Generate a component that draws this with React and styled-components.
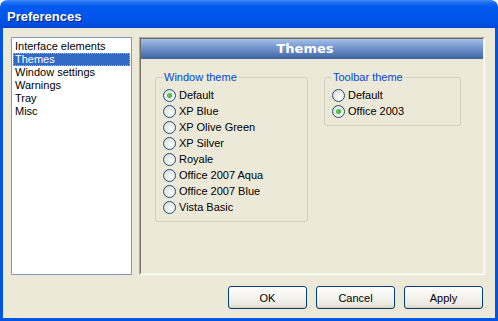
import React from 'react';
import styled, { createGlobalStyle } from 'styled-components';

const GlobalStyle = createGlobalStyle`
  html, body {
    margin: 0;
    padding: 0;
    background: #ffffff;
  }
  body {
    font-family: "Liberation Sans", Arial, sans-serif;
    font-size: 11px;
  }
`;

const Window = styled.div`
  width: 498px;
  height: 321px;
  display: flex;
  flex-direction: column;
  box-sizing: border-box;
`;

const TitleBar = styled.div`
  height: 28px;
  flex: none;
  box-sizing: border-box;
  padding: 9px 0 0 7px;
  border-radius: 7px 7px 0 0;
  background: linear-gradient(#3d8ff8 0, #1a6af2 3px, #0058ee 7px, #0056ec 60%, #0050e2 85%, #0044d0 100%);
  color: #ffffff;
  font-family: "Liberation Sans", Arial, sans-serif;
  font-weight: bold;
  font-size: 13px;
  line-height: 15px;
  text-shadow: 1px 1px 0 #0a1e8c;
`;

const Client = styled.div`
  flex: 1;
  display: flex;
  flex-direction: column;
  background: #ece9d8;
  border: 3px solid #0055e5;
  border-top: none;
  padding: 9px 10px 0 8px;
  min-height: 0;
`;

const Body = styled.div`
  display: flex;
  gap: 7px;
  height: 238px;
`;

const ListBox = styled.ul`
  width: 121px;
  box-sizing: border-box;
  margin: 0;
  padding: 2px 1px;
  list-style: none;
  background: #ffffff;
  border: 1px solid #7f9db9;
`;

const ListItem = styled.li`
  height: 13px;
  line-height: 13px;
  padding-left: 2px;
  box-sizing: border-box;
  color: ${p => (p.$selected ? '#ffffff' : '#000000')};
  background: ${p => (p.$selected ? '#316ac5' : 'transparent')};
  outline: ${p => (p.$selected ? '1px dotted #e8b040' : 'none')};
  outline-offset: -1px;
  white-space: nowrap;
`;

const Panel = styled.div`
  flex: 1;
  border: 1px solid;
  border-color: #aca899 #ffffff #ffffff #aca899;
  display: flex;
`;

const PanelInner = styled.div`
  flex: 1;
  border: 1px solid;
  border-color: #716f64 #f1efe2 #f1efe2 #716f64;
  display: flex;
  flex-direction: column;
`;

const PanelHeader = styled.div`
  height: 20px;
  line-height: 20px;
  text-align: center;
  padding-right: 14px;
  color: #ffffff;
  font-family: "DejaVu Sans", Verdana, sans-serif;
  font-weight: bold;
  font-size: 13px;
  background: linear-gradient(#a6c0ea 0%, #7c9dd2 35%, #5a7fbc 70%, #3d62a0 100%);
`;

const Groups = styled.div`
  display: flex;
  align-items: flex-start;
  gap: 16px;
  padding: 12px 0 0 14px;
`;

const Group = styled.fieldset`
  width: ${p => p.$width}px;
  box-sizing: border-box;
  margin: 0;
  padding: 3px 4px 6px 7px;
  border: 1px solid #d0d0bf;
  border-radius: 3px;
`;

const Legend = styled.legend`
  padding: 0 1px;
  color: #0046d5;
  line-height: 13px;
`;

const RadioRow = styled.label`
  display: flex;
  align-items: center;
  gap: 3px;
  height: 16px;
  color: #000000;
  white-space: nowrap;
`;

const RadioCircle = styled.span`
  width: 13px;
  height: 13px;
  box-sizing: border-box;
  border-radius: 50%;
  border: 1px solid #1c5180;
  background: radial-gradient(circle at 65% 70%, #ffffff 0%, #f2f1ec 35%, #d8d4c8 100%);
  display: flex;
  align-items: center;
  justify-content: center;
  flex: none;
`;

const RadioDot = styled.span`
  width: 5px;
  height: 5px;
  border-radius: 50%;
  background: radial-gradient(circle at 40% 40%, #5fd35f, #21a121);
`;

const ButtonRow = styled.div`
  display: flex;
  justify-content: flex-end;
  gap: 9px;
  padding: 11px 2px 0 0;
`;

const Button = styled.button`
  width: 79px;
  height: 23px;
  box-sizing: border-box;
  border: 1px solid #003c74;
  border-radius: 3px;
  background: linear-gradient(#ffffff 0%, #f6f5f0 40%, #ebe8de 85%, #d6d0c5 100%);
  font-family: "Liberation Sans", Arial, sans-serif;
  font-size: 11px;
  color: #000000;
  padding: 0;
`;

const pages = ['Interface elements', 'Themes', 'Window settings', 'Warnings', 'Tray', 'Misc'];
const windowThemes = ['Default', 'XP Blue', 'XP Olive Green', 'XP Silver', 'Royale', 'Office 2007 Aqua', 'Office 2007 Blue', 'Vista Basic'];
const toolbarThemes = ['Default', 'Office 2003'];

function Radio({ label, checked }) {
  return (
    <RadioRow>
      <RadioCircle>{checked && <RadioDot />}</RadioCircle>
      {label}
    </RadioRow>
  );
}

export default function App() {
  return (
    <Window>
      <GlobalStyle />
      <TitleBar>Preferences</TitleBar>
      <Client>
        <Body>
          <ListBox>
            {pages.map(p => (
              <ListItem key={p} $selected={p === 'Themes'}>{p}</ListItem>
            ))}
          </ListBox>
          <Panel>
            <PanelInner>
              <PanelHeader>Themes</PanelHeader>
              <Groups>
                <Group $width={153}>
                  <Legend>Window theme</Legend>
                  {windowThemes.map(t => (
                    <Radio key={t} label={t} checked={t === 'Default'} />
                  ))}
                </Group>
                <Group $width={137}>
                  <Legend>Toolbar theme</Legend>
                  {toolbarThemes.map(t => (
                    <Radio key={t} label={t} checked={t === 'Office 2003'} />
                  ))}
                </Group>
              </Groups>
            </PanelInner>
          </Panel>
        </Body>
        <ButtonRow>
          <Button>OK</Button>
          <Button>Cancel</Button>
          <Button>Apply</Button>
        </ButtonRow>
      </Client>
    </Window>
  );
}
